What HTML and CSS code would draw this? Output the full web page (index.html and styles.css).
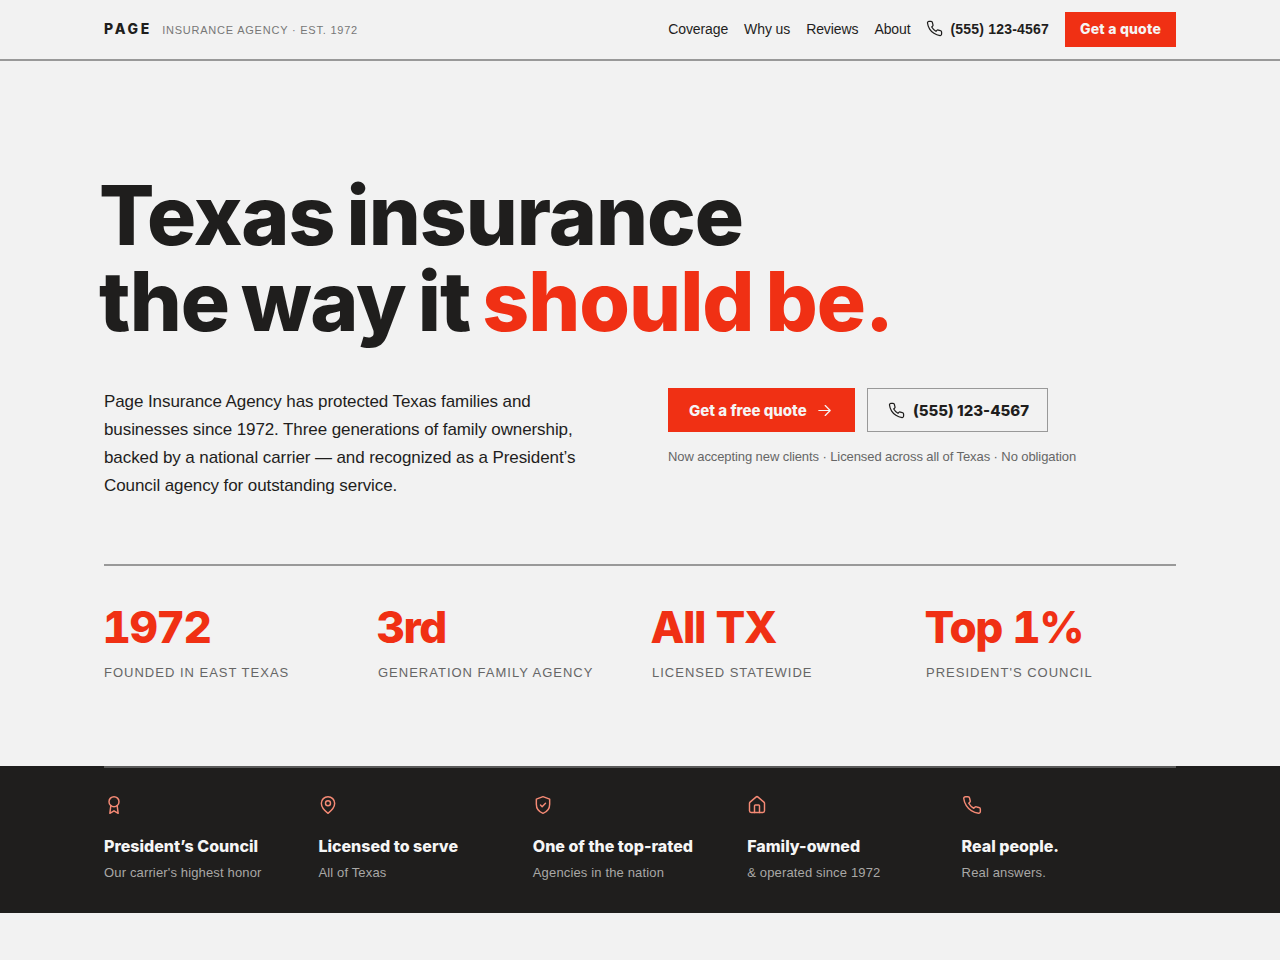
FILE: index.html
```html
<!DOCTYPE html>
<html lang="en">
<head>
    <meta charset="UTF-8">
    <meta name="viewport" content="width=device-width, initial-scale=1.0">
    <title>Page Insurance Agency</title>
    <link rel="stylesheet" href="styles.css">
</head>
<body>
    <header class="topbar">
        <div class="brand">
            <span class="brand-name">PAGE</span>
            <span class="brand-tag">INSURANCE AGENCY · EST. 1972</span>
        </div>
        <nav class="nav">
            <a href="#">Coverage</a>
            <a href="#">Why us</a>
            <a href="#">Reviews</a>
            <a href="#">About</a>
            <a href="#" class="nav-phone">
                <svg class="icon-phone" viewBox="0 0 24 24"><path d="M22 16.92v3a2 2 0 0 1-2.18 2 19.79 19.79 0 0 1-8.63-3.07 19.5 19.5 0 0 1-6-6 19.79 19.79 0 0 1-3.07-8.67A2 2 0 0 1 4.11 2h3a2 2 0 0 1 2 1.72 12.84 12.84 0 0 0 .7 2.81 2 2 0 0 1-.45 2.11L8.09 9.91a16 16 0 0 0 6 6l1.27-1.27a2 2 0 0 1 2.11-.45 12.84 12.84 0 0 0 2.81.7A2 2 0 0 1 22 16.92z"/></svg>
                (555) 123-4567
            </a>
            <a href="#" class="nav-quote">Get a quote</a>
        </nav>
    </header>

    <main class="hero">
        <h1>Texas insurance<br>the way it <span class="accent">should be.</span></h1>
        <div class="hero-row">
            <p class="hero-text">Page Insurance Agency has protected Texas families and businesses since 1972. Three generations of family ownership, backed by a national carrier — and recognized as a President’s Council agency for outstanding service.</p>
            <div class="hero-actions">
                <div class="buttons">
                    <a href="#" class="btn btn-red">Get a free quote
                        <svg class="icon-arrow" viewBox="0 0 24 24"><path d="M4 12h16M13 5l7 7-7 7"/></svg>
                    </a>
                    <a href="#" class="btn btn-line">
                        <svg class="icon-phone" viewBox="0 0 24 24"><path d="M22 16.92v3a2 2 0 0 1-2.18 2 19.79 19.79 0 0 1-8.63-3.07 19.5 19.5 0 0 1-6-6 19.79 19.79 0 0 1-3.07-8.67A2 2 0 0 1 4.11 2h3a2 2 0 0 1 2 1.72 12.84 12.84 0 0 0 .7 2.81 2 2 0 0 1-.45 2.11L8.09 9.91a16 16 0 0 0 6 6l1.27-1.27a2 2 0 0 1 2.11-.45 12.84 12.84 0 0 0 2.81.7A2 2 0 0 1 22 16.92z"/></svg>
                        (555) 123-4567
                    </a>
                </div>
                <p class="note">Now accepting new clients · Licensed across all of Texas · No obligation</p>
            </div>
        </div>
        <div class="stats">
            <div class="stat"><div class="stat-num">1972</div><div class="stat-label">FOUNDED IN EAST TEXAS</div></div>
            <div class="stat"><div class="stat-num">3rd</div><div class="stat-label">GENERATION FAMILY AGENCY</div></div>
            <div class="stat"><div class="stat-num">All TX</div><div class="stat-label">LICENSED STATEWIDE</div></div>
            <div class="stat"><div class="stat-num">Top 1%</div><div class="stat-label">PRESIDENT'S COUNCIL</div></div>
        </div>
    </main>

    <section class="band">
        <div class="band-inner">
            <div class="feature">
                <svg class="feature-icon" viewBox="0 0 24 24"><circle cx="12" cy="8" r="6"/><path d="M8.2 12.7 7 22l5-3 5 3-1.2-9.3"/></svg>
                <h3>President’s Council</h3>
                <p>Our carrier's highest honor</p>
            </div>
            <div class="feature">
                <svg class="feature-icon" viewBox="0 0 24 24"><path d="M20 10c0 6-8 12-8 12s-8-6-8-12a8 8 0 0 1 16 0Z"/><circle cx="12" cy="10" r="3"/></svg>
                <h3>Licensed to serve</h3>
                <p>All of Texas</p>
            </div>
            <div class="feature">
                <svg class="feature-icon" viewBox="0 0 24 24"><path d="M12 2 4 5v6c0 5.5 3.4 9.2 8 11 4.6-1.8 8-5.5 8-11V5Z"/><path d="m9 12 2 2 4-4"/></svg>
                <h3>One of the top-rated</h3>
                <p>Agencies in the nation</p>
            </div>
            <div class="feature">
                <svg class="feature-icon" viewBox="0 0 24 24"><path d="M3 10a2 2 0 0 1 .7-1.5l7-6a2 2 0 0 1 2.6 0l7 6A2 2 0 0 1 21 10v9a2 2 0 0 1-2 2H5a2 2 0 0 1-2-2Z"/><path d="M9 21v-8a1 1 0 0 1 1-1h4a1 1 0 0 1 1 1v8"/></svg>
                <h3>Family-owned</h3>
                <p>&amp; operated since 1972</p>
            </div>
            <div class="feature">
                <svg class="feature-icon" viewBox="0 0 24 24"><path d="M22 16.92v3a2 2 0 0 1-2.18 2 19.79 19.79 0 0 1-8.63-3.07 19.5 19.5 0 0 1-6-6 19.79 19.79 0 0 1-3.07-8.67A2 2 0 0 1 4.11 2h3a2 2 0 0 1 2 1.72 12.84 12.84 0 0 0 .7 2.81 2 2 0 0 1-.45 2.11L8.09 9.91a16 16 0 0 0 6 6l1.27-1.27a2 2 0 0 1 2.11-.45 12.84 12.84 0 0 0 2.81.7A2 2 0 0 1 22 16.92z"/></svg>
                <h3>Real people.</h3>
                <p>Real answers.</p>
            </div>
        </div>
    </section>
</body>
</html>
```

FILE: styles.css
```css
* {
    box-sizing: border-box;
}
body {
    margin: 0;
    background: #f2f2f2;
    color: #1f1e1d;
    font-family: "Liberation Sans", Arial, sans-serif;
}
a {
    color: inherit;
    text-decoration: none;
}
svg {
    fill: none;
    stroke: currentColor;
    stroke-width: 1.75;
    stroke-linecap: round;
    stroke-linejoin: round;
    flex-shrink: 0;
}
.topbar {
    height: 61px;
    padding: 0 104px;
    display: flex;
    justify-content: space-between;
    align-items: center;
    border-bottom: 2px solid #999;
}
.brand {
    display: flex;
    align-items: baseline;
    gap: 10px;
    padding-bottom: 2px;
}
.brand-name {
    font-family: Inter, sans-serif;
    font-size: 14px;
    font-weight: 800;
    letter-spacing: 2.75px;
}
.brand-tag {
    font-size: 11px;
    letter-spacing: .78px;
    color: #777;
}
.nav {
    display: flex;
    align-items: center;
    gap: 16px;
    font-size: 14px;
    letter-spacing: -.1px;
}
.nav a {
    padding-bottom: 2px;
}
.nav-phone {
    display: flex;
    align-items: center;
    gap: 7px;
    font-weight: 700;
    letter-spacing: .2px;
}
.icon-phone {
    width: 17px;
    height: 17px;
}
.nav .nav-quote {
    font-family: Inter, sans-serif;
    background: #f03014;
    color: #f5f5f5;
    font-weight: 800;
    font-size: 14px;
    letter-spacing: .2px;
    padding: 8px 15px;
    height: 35px;
}
.hero {
    padding: 0 104px;
}
h1 {
    margin: 112px 0 0 -5px;
    font-family: Inter, sans-serif;
    font-size: 82px;
    line-height: 86px;
    font-weight: 800;
    letter-spacing: -1px;
    word-spacing: -5px;
}
.accent {
    color: #f03014;
}
.hero-row {
    display: flex;
    margin-top: 41px;
}
.hero-text {
    flex: 0 0 564px;
    margin: 2px 0 0;
    padding-right: 84px;
    font-size: 17px;
    line-height: 28px;
    letter-spacing: -.09px;
}
.hero-actions {
    padding-top: 2px;
}
.buttons {
    display: flex;
    gap: 12px;
}
.btn {
    display: flex;
    align-items: center;
    height: 44px;
    font-family: Inter, sans-serif;
    font-size: 15px;
    font-weight: 800;
    letter-spacing: 0;
}
.btn-red {
    width: 187px;
    padding-left: 21px;
    gap: 9px;
    background: #f03014;
    color: #f5f5f5;
}
.btn-line {
    width: 181px;
    padding-left: 20px;
    gap: 8px;
    border: 1px solid #999;
}
.icon-arrow {
    width: 17px;
    height: 17px;
}
.note {
    margin: 17px 0 0;
    font-size: 13px;
    letter-spacing: -.09px;
    color: #666;
}
.stats {
    margin-top: 64px;
    padding-top: 36px;
    border-top: 2px solid #999;
    display: grid;
    grid-template-columns: repeat(4, 1fr);
    gap: 24px;
    height: 202px;
}
.stat-num {
    margin-left: -1.5px;
    font-family: Inter, sans-serif;
    font-size: 44px;
    line-height: 50px;
    font-weight: 800;
    font-variant-numeric: tabular-nums;
    letter-spacing: -1.4px;
    color: #f03014;
}
.stat-label {
    margin-top: 13px;
    font-size: 13px;
    letter-spacing: 1px;
    color: #666;
}
.band {
    background: #1f1e1d;
    height: 147px;
    padding: 0 104px;
}
.band-inner {
    height: 100%;
    display: grid;
    grid-template-columns: repeat(5, 1fr);
    border-top: 2px solid #5a5a5a;
    padding-top: 28px;
}
.feature-icon {
    display: block;
    width: 20px;
    height: 20px;
    margin-top: -1px;
    color: #f58a75;
}
.feature h3 {
    margin: 21px 0 0;
    font-family: Inter, sans-serif;
    font-size: 16px;
    line-height: 20px;
    font-weight: 800;
    letter-spacing: 0;
    color: #f5f5f5;
}
.feature p {
    margin: 8px 0 0;
    font-size: 13px;
    line-height: 18px;
    letter-spacing: .15px;
    color: #a9a8a6;
}
```
